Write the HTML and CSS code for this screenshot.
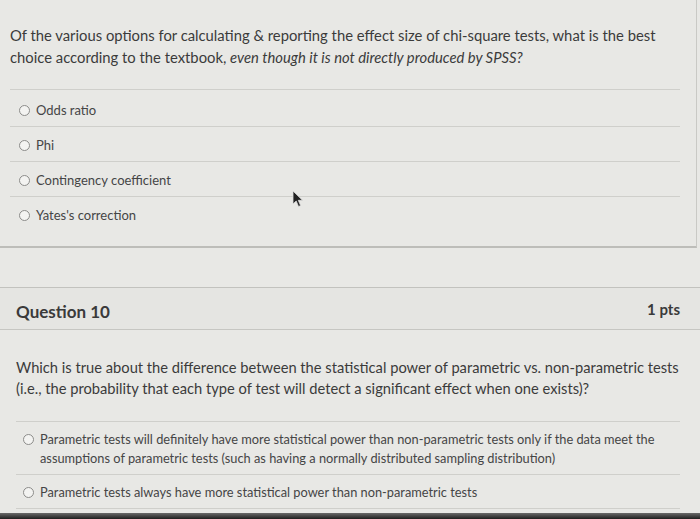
FILE: index.html
```html
<!DOCTYPE html>
<html lang="en">
<head>
<meta charset="utf-8">
<title>Quiz</title>
<link rel="stylesheet" href="styles.css">
</head>
<body>
<div class="page">
  <section class="card card-prev">
    <div class="q-text">Of the various options for calculating &amp; reporting the effect size of chi-square tests, what is the best choice according to the textbook, <em>even though it is not directly produced by SPSS?</em></div>
    <ul class="answers">
      <li class="answer"><span class="radio"></span><span>Odds ratio</span></li>
      <li class="answer"><span class="radio"></span><span>Phi</span></li>
      <li class="answer"><span class="radio"></span><span>Contingency coefficient</span></li>
      <li class="answer"><span class="radio"></span><span>Yates's correction</span></li>
    </ul>
  </section>

  <section class="card card-q10">
    <header class="q-header">
      <h2 class="q-title">Question 10</h2>
      <span class="q-pts">1 pts</span>
    </header>
    <div class="q-body">
      <div class="q-text2">Which is true about the difference between the statistical power of parametric vs. non-parametric tests (i.e., the probability that each type of test will detect a significant effect when one exists)?</div>
      <ul class="answers2">
        <li class="answer2"><span class="radio"></span><span>Parametric tests will definitely have more statistical power than non-parametric tests only if the data meet the assumptions of parametric tests (such as having a normally distributed sampling distribution)</span></li>
        <li class="answer2"><span class="radio"></span><span>Parametric tests always have more statistical power than non-parametric tests</span></li>
      </ul>
    </div>
  </section>
  <div class="bezel"></div>
  <svg class="cursor" width="12" height="18" viewBox="0 0 12 18"><path d="M1 1 L1 14 L4.2 11 L6.5 16.5 L8.6 15.6 L6.3 10.3 L10.5 10.3 Z" fill="#222" stroke="#ddd" stroke-width="0.8"/></svg>
</div>
</body>
</html>
```

FILE: styles.css
```css
* { box-sizing: border-box; }
html, body { margin: 0; padding: 0; }
body {
  background: #e8e8e5;
  font-family: Lato, "Open Sans", sans-serif;
  color: #3b3b3b;
  width: 700px;
  height: 519px;
  overflow: hidden;
}
.page { position: relative; height: 519px; display: flex; flex-direction: column; }

.card-prev {
  width: 697px;
  border-right: 1px solid #c9c9c5;
  border-bottom: 2px solid #bdbdb9;
  padding: 24px 0 15px 10px;
}
.q-text {
  font-size: 14.8px;
  line-height: 22px;
  width: 660px;
  margin-bottom: 21px;
}
.q-text em { font-style: italic; }
.answers { list-style: none; margin: 0; padding: 0; width: 670px; }
.answer {
  display: flex;
  align-items: center;
  gap: 6px;
  border-top: 1px solid #cfcfcb;
  padding: 8px 0 6px 9px;
  line-height: 20px;
  font-size: 13px;
  color: #454545;
}
.answer:first-child { padding-top: 10px; padding-bottom: 6px; }
.radio {
  width: 11px; height: 11px;
  border-radius: 50%;
  border: 1px solid #8c8c8a;
  background: #f3f3f1;
  flex: none;
}

.card-q10 {
  margin-top: 39px;
  border-top: 1px solid #c2c2be;
  flex: 1;
}
.q-header {
  display: flex;
  justify-content: space-between;
  align-items: center;
  height: 42px;
  padding: 0 20px 0 16px;
  background: #e5e5e2;
  border-bottom: 1px solid #c6c6c2;
}
.q-title { margin: 0; padding-top: 5px; font-size: 17px; font-weight: 700; color: #3a3a3a; }
.q-pts { font-size: 15px; font-weight: 700; color: #3a3a3a; }
.q-body { padding: 27px 0 0 16px; }
.q-text2 {
  font-size: 14.7px;
  line-height: 21px;
  width: 672px;
  margin-bottom: 22px;
}
.answers2 { list-style: none; margin: 0; padding: 0; width: 664px; }
.answer2 {
  display: flex;
  align-items: flex-start;
  gap: 6px;
  border-top: 1px solid #cfcfcb;
  padding: 8px 0 6px 7px;
  font-size: 12.8px;
  line-height: 19px;
  color: #454545;
}
.answer2 .radio { margin-top: 4px; }
.answer2:last-child { border-bottom: 1px solid #cfcfcb; padding-bottom: 6px; }
.bezel {
  position: absolute;
  left: 0; right: 0; bottom: 0;
  height: 6px;
  background: linear-gradient(#6a6a6a, #1e1e1e);
}
.cursor { position: absolute; left: 292px; top: 190px; }
```
